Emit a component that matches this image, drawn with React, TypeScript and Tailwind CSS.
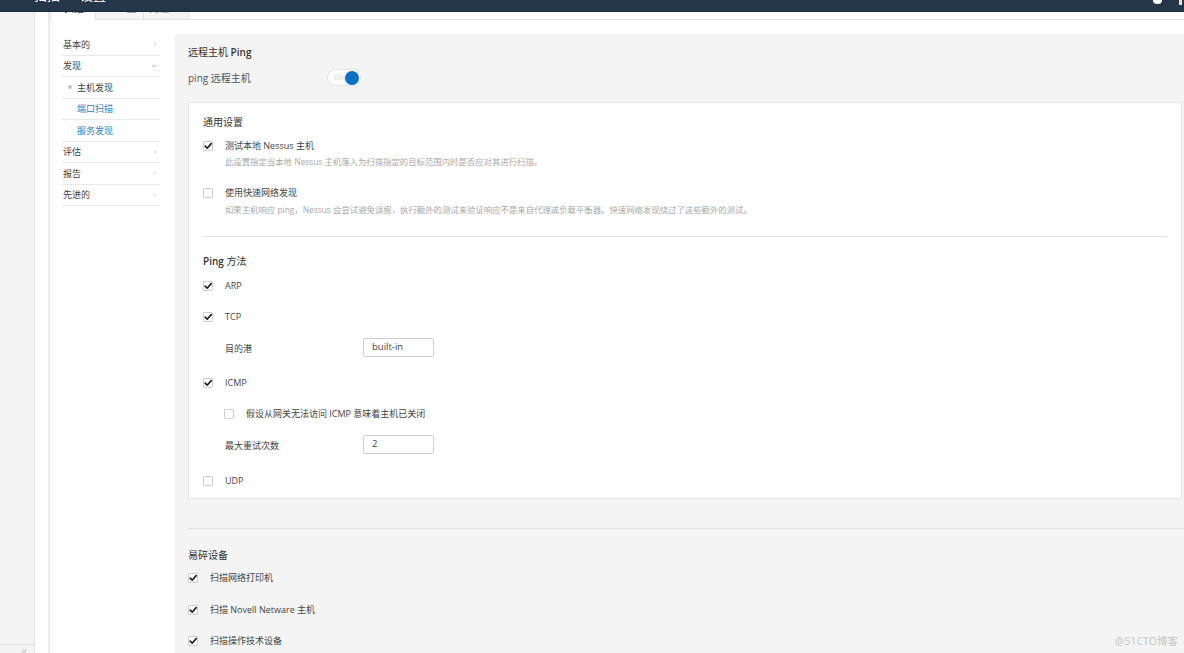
import React from 'react';

const font = "font-['Open_Sans','Noto_Sans_CJK_SC',sans-serif]";

const Check: React.FC<{ checked?: boolean }> = ({ checked }) => (
  <span className="relative w-[10px] h-[10px] shrink-0 bg-white border border-[#cfcfcf] rounded-[1px]">
    {checked && (
      <svg viewBox="0 0 10 10" className="absolute left-[-1px] top-[-1px] w-[10px] h-[10px]">
        <path d="M2.2 5.2 L4.2 7.2 L8.2 2.6" fill="none" stroke="#222" strokeWidth="1.7" strokeLinecap="round" strokeLinejoin="round" />
      </svg>
    )}
  </span>
);

const CheckRow: React.FC<{ checked?: boolean; label: string; className?: string }> = ({ checked, label, className }) => (
  <div className={`flex items-center gap-[12px] h-[14px] ${className || ''}`}>
    <Check checked={checked} />
    <span className="text-[9px] leading-[14px] text-[#444] whitespace-nowrap">{label}</span>
  </div>
);

const ChevronRight = () => (
  <svg viewBox="0 0 6 8" className="w-[4px] h-[6px]">
    <path d="M1 1 L4.5 4 L1 7" fill="none" stroke="#c4c4c4" strokeWidth="1" />
  </svg>
);

const ChevronDown = () => (
  <svg viewBox="0 0 8 6" className="w-[6px] h-[4px]">
    <path d="M1 1 L4 4.5 L7 1" fill="none" stroke="#9a9a9a" strokeWidth="1" />
  </svg>
);

const navItems = [
  { label: '基本的', kind: 'top', icon: 'right' },
  { label: '发现', kind: 'top', icon: 'down' },
  { label: '主机发现', kind: 'active' },
  { label: '端口扫描', kind: 'link' },
  { label: '服务发现', kind: 'link' },
  { label: '评估', kind: 'top', icon: 'right' },
  { label: '报告', kind: 'top', icon: 'right' },
  { label: '先进的', kind: 'top', icon: 'right' },
];

const InputRow: React.FC<{ label: string; value: string; className?: string }> = ({ label, value, className }) => (
  <div className={`flex items-center h-[19px] pl-[22px] ${className || ''}`}>
    <span className="w-[138px] text-[9px] text-[#444] pt-[3px]">{label}</span>
    <div className="w-[71px] h-[19px] border border-[#cfcfcf] rounded-[2px] bg-white flex items-center pl-[8px] text-[9.5px] text-[#444]">
      {value}
    </div>
  </div>
);

export default function App() {
  return (
    <div className={`relative w-[1184px] h-[653px] overflow-hidden bg-white ${font}`}>
      {/* top bar, scrolled so only its lower edge shows */}
      <div className="relative h-[12px] bg-[#263649] border-b border-[#1c2937] overflow-hidden flex text-white text-[13px] leading-[16px]">
        <span className="ml-[34px] -mt-[13px]">扫描</span>
        <span className="ml-[20px] -mt-[13px]">设置</span>
        <div className="ml-auto flex items-start">
          <div className="w-[9px] h-[4px] bg-white rounded-b-full mr-[17px]"></div>
          <div className="w-[3px] h-[5px] bg-[#e9e3c8] mr-[2px]"></div>
        </div>
      </div>

      <div className="flex h-[641px]">
        {/* left rail */}
        <div className="w-[35px] bg-[#f4f4f4] border-r border-[#e4e4e4] flex flex-col">
          <div className="flex-1"></div>
          <div className="h-[9px] border-t border-[#e0e0e0] flex justify-end pr-[7px] text-[11px] leading-[10px] text-[#c4c4c4]">«</div>
        </div>
        <div className="w-[13px]"></div>
        <div className="w-[2px] bg-[#ececec]"></div>

        {/* main */}
        <div className="flex-1 flex flex-col">
          {/* tabs, cut off by the header */}
          <div className="flex h-[8px]">
            <div className="w-[46px] bg-white border-l border-r border-[#e3e3e3] overflow-hidden">
              <div className="-mt-[10px] pl-[13px] text-[10px] leading-[12px] text-[#333]">扫描</div>
            </div>
            <div className="w-[48px] bg-[#f4f4f4] border-r border-b border-[#e3e3e3] overflow-hidden">
              <div className="-mt-[10px] pl-[18px] text-[10px] leading-[12px] text-[#2c7bc4]">■ 置</div>
            </div>
            <div className="w-[45px] bg-[#f4f4f4] border-r border-b border-[#e3e3e3] overflow-hidden">
              <div className="-mt-[10px] pl-[5px] text-[10px] leading-[12px] text-[#aaa]">凭证</div>
            </div>
            <div className="flex-1 border-b border-[#e3e3e3]"></div>
          </div>

          <div className="flex mt-[14px] flex-1 min-h-0">
            {/* settings nav */}
            <div className="ml-[12px] w-[98px] shrink-0">
              {navItems.map((item) => (
                <div
                  key={item.label}
                  className="h-[21.5px] border-b border-[#e9e9e9] flex items-center pl-[1px] pr-[3px]"
                >
                  {item.kind === 'top' && (
                    <>
                      <span className="text-[9px] text-[#444]">{item.label}</span>
                      <span className="ml-auto">{item.icon === 'down' ? <ChevronDown /> : <ChevronRight />}</span>
                    </>
                  )}
                  {item.kind === 'active' && (
                    <>
                      <span className="ml-[5px] w-[4px] h-[4px] rounded-full bg-[#c2c2c2]"></span>
                      <span className="ml-[5px] text-[9px] text-[#444]">{item.label}</span>
                    </>
                  )}
                  {item.kind === 'link' && (
                    <span className="ml-[14px] text-[9px] text-[#2f7cc2]">{item.label}</span>
                  )}
                </div>
              ))}
            </div>

            {/* settings panel */}
            <div className="ml-[15px] flex-1 bg-[#f4f4f4] pl-[13px] pr-[2px] pt-[11px] flex flex-col">
              <div className="text-[10px] leading-[14px] text-[#333]">
                远程主机 <span className="font-semibold">Ping</span>
              </div>
              <div className="flex items-center h-[17px] mt-[10px]">
                <span className="w-[139px] text-[10px] text-[#555] pt-[2px]">ping 远程主机</span>
                <div className="relative w-[34px] h-[17px] rounded-full bg-white border border-[#e2e2e2] flex items-center pl-[6px] text-[7.5px] text-[#d0d0d0]">
                  ON
                  <span className="absolute right-[1px] top-[0.5px] w-[14px] h-[14px] rounded-full bg-[#0b6fc4]"></span>
                </div>
              </div>

              {/* card */}
              <div className="mt-[16px] bg-white border border-[#e8e8e8] px-[14px] pt-[12px] pb-[10px]">
                <div className="text-[10px] leading-[14px] text-[#333]">通用设置</div>
                <CheckRow checked label="测试本地 Nessus 主机" className="mt-[10px]" />
                <div className="mt-[3px] pl-[22px] text-[8.4px] leading-[12px] text-[#a8a8a8]">
                  此设置指定当本地 Nessus 主机落入为扫描指定的目标范围内时是否应对其进行扫描。
                </div>
                <CheckRow label="使用快速网络发现" className="mt-[18px]" />
                <div className="mt-[4px] pl-[22px] text-[8.4px] leading-[12px] text-[#a8a8a8]">
                  如果主机响应 ping，Nessus 会尝试避免误报，执行额外的测试来验证响应不是来自代理或负载平衡器。快速网络发现绕过了这些额外的测试。
                </div>
                <div className="mt-[20px] h-px bg-[#e4e4e4]"></div>

                <div className="mt-[17px] text-[10px] leading-[14px] text-[#333]">
                  <span className="font-semibold">Ping</span> 方法
                </div>
                <CheckRow checked label="ARP" className="mt-[11px]" />
                <CheckRow checked label="TCP" className="mt-[17px]" />
                <InputRow label="目的港" value="built-in" className="mt-[14px]" />
                <CheckRow checked label="ICMP" className="mt-[19px]" />
                <div className="pl-[21px] mt-[17px]">
                  <CheckRow label="假设从网关无法访问 ICMP 意味着主机已关闭" />
                </div>
                <InputRow label="最大重试次数" value="2" className="mt-[14px]" />
                <CheckRow label="UDP" className="mt-[20px]" />
              </div>

              <div className="mt-[29px] -mr-[2px] h-px bg-[#e2e2e2]"></div>
              <div className="mt-[19px] text-[10px] leading-[14px] text-[#333]">易碎设备</div>
              <CheckRow checked label="扫描网络打印机" className="mt-[9px]" />
              <CheckRow checked label="扫描 Novell Netware 主机" className="mt-[18px]" />
              <CheckRow checked label="扫描操作技术设备" className="mt-[17px]" />
            </div>
          </div>
        </div>
      </div>

      {/* watermark */}
      <div className="absolute right-[6px] top-[634px] text-[10.5px] leading-[14px] text-[#c6c6c6]">@51CTO博客</div>
    </div>
  );
}
